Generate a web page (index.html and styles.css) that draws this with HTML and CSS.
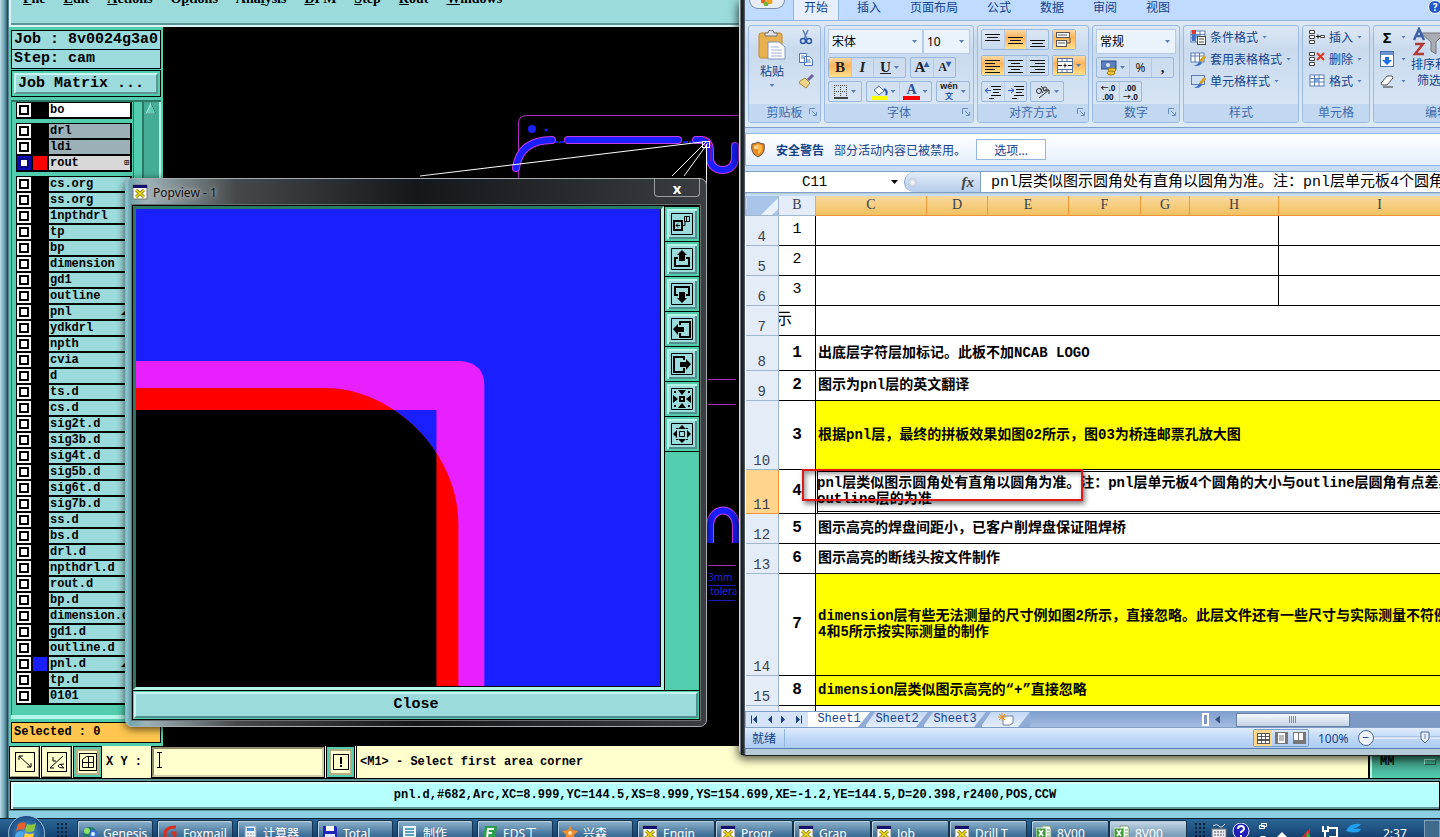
FILE: index.html
```html
<!DOCTYPE html>
<html lang="zh-CN">
<head>
    <meta charset="UTF-8">
    <meta name="viewport" content="width=device-width, initial-scale=1.0">
    <title>Genesis / Excel</title>
    <link rel="stylesheet" href="styles.css">
</head>
<body>
    <!-- 图标库 -->
    <svg class="sprite" xmlns="http://www.w3.org/2000/svg">
        <symbol id="i-x" viewBox="0 0 16 16">
            <rect x="1" y="1" width="14" height="14" fill="#fff" stroke="#777"></rect>
            <rect x="1" y="1" width="14" height="3" fill="#13136e"></rect>
            <path d="M4 6l8 7M12 6l-8 7" stroke="#8a7d10" stroke-width="3"></path>
            <path d="M4 6l8 7M12 6l-8 7" stroke="#f2e01c" stroke-width="1.5"></path>
        </symbol>
        <symbol id="i-xls" viewBox="0 0 16 16">
            <path d="M6 1h8l1 2v12H6z" fill="#f4f8f2" stroke="#7c9a78"></path>
            <path d="M11 5h3M11 8h3M11 11h3" stroke="#6fae6a"></path>
            <rect x="0" y="3" width="10" height="10" fill="#3f9a3a" stroke="#dff0dc"></rect>
            <path d="M3 5l4 6M7 5l-4 6" stroke="#fff" stroke-width="1.6"></path>
        </symbol>
        <symbol id="i-sheet" viewBox="0 0 16 16">
            <rect x="1" y="2" width="14" height="11" fill="#fff" stroke="#5a7db5"></rect>
            <path d="M1 5.500h14M1 9h14M5.500 2v11M10 2v11" stroke="#5a7db5"></path>
            <rect x="6" y="6" width="4" height="3" fill="#7fa8e0"></rect>
        </symbol>
        <symbol id="i-brush" viewBox="0 0 16 16">
            <rect x="1" y="2" width="13" height="9" fill="#fff" stroke="#5a7db5"></rect>
            <path d="M1 5h13M5 2v9M9.500 2v9" stroke="#5a7db5"></path>
            <path d="M15 5l-5 6" stroke="#d9a023" stroke-width="3"></path>
            <path d="M10 10l2 2c-2 3-5 3-8 3 3-1 4-3 6-5z" fill="#3b6fc9"></path>
        </symbol>
        <symbol id="i-left" viewBox="0 0 16 14">
            <path d="M0 1.500h15M0 4.500h10M0 7.500h15M0 10.500h10M0 13.500h15" stroke="#111"></path>
        </symbol>
        <symbol id="i-center" viewBox="0 0 16 14">
            <path d="M0 1.500h15M3 4.500h9M0 7.500h15M3 10.500h9M0 13.500h15" stroke="#111"></path>
        </symbol>
        <symbol id="i-right" viewBox="0 0 16 14">
            <path d="M0 1.500h15M5 4.500h10M0 7.500h15M5 10.500h10M0 13.500h15" stroke="#111"></path>
        </symbol>
        <symbol id="i-launch" viewBox="0 0 8 8">
            <path d="M.5 6V.5H6M3 3l4 4M7.500 4v3.500H4" stroke="#6d8fbf" fill="none"></path>
        </symbol>
    </svg>

    <!-- Genesis 主窗口 -->
    <main class="genesis">
        <div class="menubar">
            <nav class="menu">
                <a href="#"><u>F</u>ile</a>
                <a href="#"><u>E</u>dit</a>
                <a href="#"><u>A</u>ctions</a>
                <a href="#">O<u>p</u>tions</a>
                <a href="#">Ana<u>l</u>ysis</a>
                <a href="#"><u>D</u>FM</a>
                <a href="#"><u>S</u>tep</a>
                <a href="#"><u>R</u>out</a>
                <a href="#"><u>W</u>indows</a>
            </nav>
        </div>

        <div class="workspace">
            <aside class="sidebar">
                <div class="job-info">
                    <div>Job : 8v0024g3a0</div>
                    <div>Step: cam</div>
                </div>
                <div class="matrix-box">
                    <button class="matrix" type="button">Job Matrix ...</button>
                </div>
                <div class="layers">
                    <div class="layer-list">
                        <div class="layer-group">
                            <label class="layer board"><input type="checkbox"><i></i><span>bo</span></label>
                        </div>
                        <div class="layer-group">
                            <label class="layer drill"><input type="checkbox"><i></i><span>drl</span></label>
                            <label class="layer drill"><input type="checkbox"><i></i><span>ldi</span></label>
                            <label class="layer work"><input type="checkbox"><i class="red"></i><span>rout<b>⊞</b></span></label>
                        </div>
                        <div class="layer-group">
                            <label class="layer"><input type="checkbox"><i></i><span>cs.org</span></label>
                            <label class="layer"><input type="checkbox"><i></i><span>ss.org</span></label>
                            <label class="layer"><input type="checkbox"><i></i><span>1npthdrl</span></label>
                            <label class="layer"><input type="checkbox"><i></i><span>tp</span></label>
                            <label class="layer"><input type="checkbox"><i></i><span>bp</span></label>
                            <label class="layer"><input type="checkbox"><i></i><span>dimension</span></label>
                            <label class="layer"><input type="checkbox"><i></i><span>gd1</span></label>
                            <label class="layer"><input type="checkbox"><i></i><span>outline</span></label>
                            <label class="layer"><input type="checkbox"><i></i><span>pnl<b>◢</b></span></label>
                            <label class="layer"><input type="checkbox"><i></i><span>ydkdrl</span></label>
                            <label class="layer"><input type="checkbox"><i></i><span>npth</span></label>
                            <label class="layer"><input type="checkbox"><i></i><span>cvia</span></label>
                            <label class="layer"><input type="checkbox"><i></i><span>d</span></label>
                            <label class="layer"><input type="checkbox"><i></i><span>ts.d</span></label>
                            <label class="layer"><input type="checkbox"><i></i><span>cs.d</span></label>
                            <label class="layer"><input type="checkbox"><i></i><span>sig2t.d</span></label>
                            <label class="layer"><input type="checkbox"><i></i><span>sig3b.d</span></label>
                            <label class="layer"><input type="checkbox"><i></i><span>sig4t.d</span></label>
                            <label class="layer"><input type="checkbox"><i></i><span>sig5b.d</span></label>
                            <label class="layer"><input type="checkbox"><i></i><span>sig6t.d</span></label>
                            <label class="layer"><input type="checkbox"><i></i><span>sig7b.d</span></label>
                            <label class="layer"><input type="checkbox"><i></i><span>ss.d</span></label>
                            <label class="layer"><input type="checkbox"><i></i><span>bs.d</span></label>
                            <label class="layer"><input type="checkbox"><i></i><span>drl.d</span></label>
                            <label class="layer"><input type="checkbox"><i></i><span>npthdrl.d</span></label>
                            <label class="layer"><input type="checkbox"><i></i><span>rout.d</span></label>
                            <label class="layer"><input type="checkbox"><i></i><span>bp.d</span></label>
                            <label class="layer"><input type="checkbox"><i></i><span>dimension.d</span></label>
                            <label class="layer"><input type="checkbox"><i></i><span>gd1.d</span></label>
                            <label class="layer"><input type="checkbox"><i></i><span>outline.d</span></label>
                            <label class="layer"><input type="checkbox"><i class="blue"></i><span>pnl.d<b>◢</b></span></label>
                            <label class="layer"><input type="checkbox"><i></i><span>tp.d</span></label>
                            <label class="layer"><input type="checkbox"><i></i><span>0101</span></label>
                        </div>
                    </div>
                    <div class="layer-scroll">
                        <svg width="12" height="14" viewBox="0 0 12 14"><path d="M6 1L1 12h10z" fill="#5fcdb2" stroke="#b5f5e4"></path><path d="M6 1l5 11H1" fill="none" stroke="#2c7a66"></path></svg>
                    </div>
                </div>
                <div class="selected">Selected : 0</div>
            </aside>

            <svg class="board-view" xmlns="http://www.w3.org/2000/svg">
                <g transform="translate(-163 -27)" fill="none">
                    <path d="M518.500 200V123q0-7 8-7.500H745" stroke="#b32fc4"></path>
                    <path d="M516 168q4-28 36-28M568 140h110" stroke="#c73bf0" stroke-width="8" stroke-linecap="round"></path>
                    <path d="M516 168q4-28 36-28M568 140h110" stroke="#1a1fff" stroke-width="6" stroke-linecap="round"></path>
                    <path d="M696 140h6q8 1 8 12v6c0 16 25 16 25 0v-12" stroke="#c73bf0" stroke-width="8" stroke-linecap="round"></path>
                    <path d="M696 140h6q8 1 8 12v6c0 16 25 16 25 0v-12" stroke="#1a1fff" stroke-width="6" stroke-linecap="round"></path>
                    <path d="M703 137q6 1 8 8v16" stroke="#c3143a"></path>
                    <circle cx="532" cy="129" r="4" fill="#1a1fff"></circle>
                    <circle cx="546" cy="130" r="1.500" fill="#1a1fff"></circle>
                    <path d="M556 142h10M683 142h10" stroke="#1a1fff" stroke-width="2" stroke-dasharray="2 1"></path>
                    <path d="M420 176L702 142M672 176l34-34M684 176l24-33M706.500 144v40" stroke="#fff"></path>
                    <rect x="702.500" y="141.500" width="7" height="6" stroke="#fff"></rect>
                    <path d="M708 379.500h28M708 404.500h28M708 565.500h28" stroke="#b32fc4"></path>
                    <path d="M710 543v-16c0-22 26-22 26 0v16" stroke="#c73bf0" stroke-width="8"></path>
                    <path d="M710 543v-16c0-22 26-22 26 0v16" stroke="#1a1fff" stroke-width="6"></path>
                    <path d="M708 585.500h28M708 600.500h28" stroke="#1a1fc0"></path>
                    <text class="board-text" x="708" y="581">3mm</text>
                    <text class="board-text" x="710" y="595">tolera</text>
                </g>
            </svg>
        </div>

        <!-- 命令行 -->
        <div class="command">
            <button class="tool" type="button" aria-label="zoom">
                <svg width="20" height="20" viewBox="0 0 20 20" fill="none" stroke="#000"><rect x=".5" y=".5" width="19" height="19"></rect><path d="M4 4l12 11M4 8V4h4M16 11v4h-4"></path></svg>
            </button>
            <button class="tool" type="button" aria-label="angle">
                <svg width="20" height="20" viewBox="0 0 20 20" fill="none" stroke="#000"><rect x=".5" y=".5" width="19" height="19"></rect><path d="M3 16L16 4M3 16h4M6 5v4h3M13 12l4 4M17 12q-6 0-6 2t6 2"></path></svg>
            </button>
            <button class="tool green" type="button" aria-label="grid">
                <svg width="18" height="18" viewBox="0 0 18 18" fill="none" stroke="#000"><rect x=".5" y=".5" width="17" height="17"></rect><path d="M3.500 14.500v-8l4-3h7v11zM3 9.500h12M9.500 3v12"></path></svg>
            </button>
            <label class="xy" for="xy">X Y :</label>
            <div class="xy-field">
                <svg width="7" height="16" viewBox="0 0 7 16" fill="none" stroke="#000"><path d="M1 .5h5M3.500 1v14M1 15.500h5"></path></svg>
                <input id="xy" type="text">
            </div>
            <button class="tool green" type="button" aria-label="abort">
                <svg width="16" height="16" viewBox="0 0 16 16" fill="none" stroke="#000"><rect x=".5" y=".5" width="15" height="15"></rect><path d="M8 3v7M8 11v2" stroke-width="2"></path></svg>
            </button>
            <div class="hint">&lt;M1&gt; - Select first area corner</div>
            <button class="unit" type="button">MM<i></i></button>
        </div>
        <div class="status-wrap">
            <div class="status">pnl.d,#682,Arc,XC=8.999,YC=144.5,XS=8.999,YS=154.699,XE=-1.2,YE=144.5,D=20.398,r2400,POS,CCW</div>
        </div>
    </main>

    <!-- Excel 窗口 -->
    <section class="excel">
        <div class="tabs">
            <div class="orb"><svg width="20" height="12" viewBox="0 0 20 12"><rect x="1" y="-4" width="7" height="9" rx="2" fill="#e8641b"></rect><rect x="9" y="-2" width="9" height="8" rx="2" fill="#f0a21e"></rect><rect x="5" y="3" width="7" height="6" rx="2" fill="#7ab33a"></rect></svg></div>
            <a class="tab active" href="#">开始</a>
            <a class="tab" href="#">插入</a>
            <a class="tab" href="#">页面布局</a>
            <a class="tab" href="#">公式</a>
            <a class="tab" href="#">数据</a>
            <a class="tab" href="#">审阅</a>
            <a class="tab" href="#">视图</a>
            <button class="help" type="button">?</button>
        </div>

        <div class="ribbon">
            <div class="group g-clip">
                <div class="group-body split">
                    <button class="big" type="button">
                        <svg width="28" height="30" viewBox="0 0 28 30"><rect x="1" y="3" width="23" height="25" rx="2" fill="#e8b04e" stroke="#c08a2d"></rect><path d="M7 6V3h3q0-3 3-3t3 3h3v3z" fill="#dfe3ea" stroke="#777"></path><path d="M10 12h11l6 5v12H10z" fill="#fff" stroke="#7d95bd"></path><path d="M13 17h8M13 20h11M13 23h11M13 26h11" stroke="#9fb3d4"></path></svg>
                        粘贴
                        <i class="caret"></i>
                    </button>
                    <div class="stack">
                        <svg width="16" height="16" viewBox="0 0 16 16" fill="none"><path d="M5 1l4 9M10 1L6 10" stroke="#5c7fb8" stroke-width="1.500"></path><circle cx="5" cy="12" r="2.500" stroke="#2d56a5" stroke-width="1.500"></circle><circle cx="11" cy="12" r="2.500" stroke="#2d56a5" stroke-width="1.500"></circle></svg>
                        <svg width="16" height="16" viewBox="0 0 16 16" fill="#fff" stroke="#4d76b8"><path d="M1.500 2.500h7v9h-7zM6.500 5.500h5l3 3v6h-8z"></path><path d="M3 5h3M3 7h3M8 9h4M8 11h5"></path></svg>
                        <svg width="16" height="16" viewBox="0 0 16 16"><path d="M15 2l-5 5" stroke="#6a5fa8" stroke-width="3"></path><path d="M2 8l5-3 5 5-4 5-7-5z" fill="#f0d58a" stroke="#a98a3d"></path></svg>
                    </div>
                </div>
                <div class="group-label"><span>剪贴板</span><svg width="8" height="8"><use href="#i-launch"></use></svg></div>
            </div>

            <div class="group g-font">
                <div class="group-body">
                    <div class="row tight">
                        <span class="combo c-font"><select aria-label="字体"><option>宋体</option></select></span>
                        <span class="combo c-size"><select aria-label="字号"><option>10</option></select></span>
                    </div>
                    <div class="row">
                        <div class="btns"><button class="on serif" type="button"><b>B</b></button><button class="serif" type="button"><em>I</em></button><button class="serif wide" type="button"><u>U</u><i class="caret"></i></button></div>
                        <div class="btns"><button class="serif" type="button">A<sup>▴</sup></button><button class="serif small" type="button">A<sup>▾</sup></button></div>
                    </div>
                    <div class="row">
                        <div class="btns"><button class="wide" type="button"><svg width="14" height="14" viewBox="0 0 14 14" stroke="#444"><path d="M.5 0v13M6.500 0v13M12.500 0v13M0 .5h13M0 6.500h13" stroke-dasharray="1 1"></path><path d="M0 13h14" stroke-width="2"></path></svg><i class="caret"></i></button></div>
                        <div class="btns">
                            <button class="wide" type="button"><svg width="17" height="16" viewBox="0 0 17 16"><path d="M3 6l5-4 5 5-5 4z" fill="#fff" stroke="#4d6ea5"></path><path d="M13 5q4 2 2 6" stroke="#2d56a5" stroke-width="2" fill="none"></path><rect x="0" y="12" width="17" height="4" fill="#ff0"></rect></svg><i class="caret"></i></button>
                            <button class="wide" type="button"><span class="font-color">A</span><i class="caret"></i></button>
                        </div>
                        <div class="btns"><button class="wide" type="button"><span class="pinyin"><span>wén</span><span>文</span></span><i class="caret"></i></button></div>
                    </div>
                </div>
                <div class="group-label"><span>字体</span><svg width="8" height="8"><use href="#i-launch"></use></svg></div>
            </div>

            <div class="group g-align">
                <div class="group-body">
                    <div class="row">
                        <div class="btns"><button type="button"><svg width="16" height="14" viewBox="0 0 16 14" stroke="#111"><path d="M0 1.500h15M2 4.500h11M0 7.500h15"></path></svg></button><button class="on" type="button"><svg width="16" height="14" viewBox="0 0 16 14" stroke="#111"><path d="M0 4.500h15M2 7.500h11M0 10.500h15"></path></svg></button><button type="button"><svg width="16" height="14" viewBox="0 0 16 14" stroke="#111"><path d="M0 7.500h15M2 10.500h11M0 13.500h15"></path></svg></button></div>
                        <div class="btns"><button class="on" type="button"><svg width="16" height="16" viewBox="0 0 16 16" fill="#fff" stroke="#555"><rect x=".5" y=".5" width="13" height="5"></rect><rect x=".5" y="8.500" width="10" height="6"></rect><path d="M2 3h9M2 11h7M14 6v5h-3" fill="none"></path></svg></button></div>
                    </div>
                    <div class="row">
                        <div class="btns"><button class="on" type="button"><svg width="16" height="14"><use href="#i-left"></use></svg></button><button type="button"><svg width="16" height="14"><use href="#i-center"></use></svg></button><button type="button"><svg width="16" height="14"><use href="#i-right"></use></svg></button></div>
                        <div class="btns"><button class="on wide" type="button"><svg width="16" height="15" viewBox="0 0 16 15" fill="#fff" stroke="#56719c"><rect x=".5" y=".5" width="15" height="14"></rect><path d="M0 3.500h16M0 11.500h16M5 0v3M10 0v3M5 12v3M10 12v3"></path><path d="M1 7.500h4M11 7.500h4M8 5.500v4M6.500 7.500h3" stroke="#111"></path></svg><i class="caret"></i></button></div>
                    </div>
                    <div class="row">
                        <div class="btns"><button type="button"><svg width="16" height="14" viewBox="0 0 16 14" stroke="#111"><path d="M6 1.500h10M8 4.500h8M8 7.500h6M6 10.500h10M4 13.500h5"></path><path d="M0 5.500h6M3 3L0 5.500l3 2.500" stroke="#2d56c5" fill="none"></path></svg></button><button type="button"><svg width="16" height="14" viewBox="0 0 16 14" stroke="#111"><path d="M6 1.500h10M8 4.500h8M8 7.500h6M6 10.500h10M4 13.500h5"></path><path d="M0 5.500h6M3 3l3 2.500L3 8" stroke="#2d56c5" fill="none"></path></svg></button></div>
                        <div class="btns"><button class="wide" type="button"><svg width="16" height="16" viewBox="0 0 16 16" fill="none" stroke="#333"><path d="M4 14L14 6M10 6h4v4"></path><circle cx="4" cy="7" r="2.500"></circle><path d="M5 4l3 5M6 2l4 5"></path><circle cx="10" cy="5" r="2"></circle></svg><i class="caret"></i></button></div>
                    </div>
                </div>
                <div class="group-label"><span>对齐方式</span><svg width="8" height="8"><use href="#i-launch"></use></svg></div>
            </div>

            <div class="group g-num">
                <div class="group-body">
                    <div class="row tight">
                        <span class="combo c-num"><select aria-label="数字格式"><option>常规</option></select></span>
                    </div>
                    <div class="row">
                        <div class="btns"><button class="wide" type="button"><svg width="16" height="16" viewBox="0 0 16 16"><rect x="0" y="1" width="15" height="8" fill="#5b7fc0" stroke="#2f4f8c"></rect><circle cx="7" cy="5" r="2" fill="#dce6f7"></circle><ellipse cx="11" cy="10" rx="4" ry="2" fill="#f0c03a" stroke="#a87d12"></ellipse><ellipse cx="10" cy="13" rx="4" ry="2" fill="#f0c03a" stroke="#a87d12"></ellipse></svg><i class="caret"></i></button><button type="button">%</button><button class="serif" type="button">,</button></div>
                    </div>
                    <div class="row">
                        <div class="btns decimals"><button type="button"><span>←.0<br>.00</span></button><button type="button"><span>.00<br>→.0</span></button></div>
                    </div>
                </div>
                <div class="group-label"><span>数字</span><svg width="8" height="8"><use href="#i-launch"></use></svg></div>
            </div>

            <div class="group g-style">
                <div class="group-body list">
                    <button type="button"><svg width="16" height="16" viewBox="0 0 16 16"><use href="#i-sheet"></use><path d="M2 1h4v4H2z" fill="#d8392b"></path><path d="M2 6h3v6H2z" fill="#3b6fc9"></path><rect x="7.500" y="7.500" width="8" height="8" fill="#fff" stroke="#444"></rect><path d="M9 10h5M9 13h5" stroke="#444"></path></svg>条件格式<i class="caret"></i></button>
                    <button type="button"><svg width="16" height="16"><use href="#i-brush"></use></svg>套用表格格式<i class="caret"></i></button>
                    <button type="button"><svg width="16" height="16" viewBox="0 0 16 16"><rect x="1.500" y="2.500" width="13" height="9" fill="#cfe0f7" stroke="#5a7db5"></rect><path d="M15 5l-5 6" stroke="#d9a023" stroke-width="3"></path><path d="M10 10l2 2c-2 3-5 3-8 3 3-1 4-3 6-5z" fill="#3b6fc9"></path></svg>单元格样式<i class="caret"></i></button>
                </div>
                <div class="group-label"><span>样式</span></div>
            </div>

            <div class="group g-cells">
                <div class="group-body list">
                    <button type="button"><svg width="16" height="16" viewBox="0 0 16 16" fill="#fff" stroke="#444"><path d="M.5 1.500h5v3h-5zM.5 6.500h5v3h-5zM.5 11.500h5v3h-5zM11.500 6.500h4v2h-4z"></path><path d="M7 7.500h4M9 5.500v4" stroke="#111"></path></svg>插入<i class="caret"></i></button>
                    <button type="button"><svg width="16" height="16" viewBox="0 0 16 16" fill="#fff" stroke="#444"><path d="M.5 1.500h5v3h-5zM.5 6.500h5v3h-5zM.5 11.500h5v3h-5z"></path><path d="M8 2l7 7M15 2L8 9" stroke="#e0341d" stroke-width="2"></path></svg>删除<i class="caret"></i></button>
                    <button type="button"><svg width="16" height="16"><use href="#i-sheet"></use></svg>格式<i class="caret"></i></button>
                </div>
                <div class="group-label"><span>单元格</span></div>
            </div>

            <div class="group g-edit">
                <div class="group-body split">
                    <div class="list">
                        <button type="button"><b class="sigma">Σ</b><i class="caret"></i></button>
                        <button type="button"><svg width="14" height="16" viewBox="0 0 14 16"><rect x=".5" y=".5" width="13" height="15" fill="#fff" stroke="#4a6fae"></rect><rect x="1" y="1" width="12" height="3" fill="#6f94d6"></rect><path d="M5 6h4v3h3l-5 5-5-5h3z" fill="#1f6fe0"></path></svg><i class="caret"></i></button>
                        <button type="button"><svg width="14" height="14" viewBox="0 0 14 14"><path d="M1 9l6-7h5l1 2-6 7H2z" fill="#fff" stroke="#555"></path><path d="M3 13h10" stroke="#333"></path></svg><i class="caret"></i></button>
                    </div>
                    <button class="big sort" type="button">
                        <svg width="36" height="30" viewBox="0 0 36 30" fill="none"><path d="M10 6h24l-9 9v12l-5-3v-9z" fill="#a9acb3" stroke="#74777e"></path><path d="M3 13L8 2l5 11M5 9h6" stroke="#3d62a8" stroke-width="2.500"></path><path d="M4 17h8L4 27h9" stroke="#b23a35" stroke-width="2.500"></path></svg>
                        <span>排序和</span>
                        <span>筛选</span>
                    </button>
                </div>
                <div class="group-label"><span>编辑</span></div>
            </div>
        </div>

        <div class="message">
            <svg width="16" height="18" viewBox="0 0 16 18"><path d="M8 1q3 2 6 2 2 9-6 13Q0 12 2 3q3 0 6-2z" fill="#f08a1d" stroke="#555"></path><path d="M8 3q2 1 4 1.500 1 6-4 9z" fill="#ffb84a"></path><path d="M4 5q2 0 4-2v5H4z" fill="#ffd28a"></path></svg>
            <strong>安全警告</strong>
            <span>部分活动内容已被禁用。</span>
            <button type="button">选项...</button>
        </div>

        <div class="formula">
            <div class="name-box"><span>C11</span><i class="caret black"></i></div>
            <div class="fx"><span class="knob"></span><em>fx</em></div>
            <div class="formula-text">pnl层类似图示圆角处有直角以圆角为准。注：pnl层单元板4个圆角</div>
        </div>

        <div class="sheet">
            <table class="grid">
                <colgroup><col class="w-row"><col class="w-b"><col class="w-c"><col class="w-d"><col class="w-e"><col class="w-f"><col class="w-g"><col class="w-h"><col class="w-i"></colgroup>
                <thead>
                    <tr><th class="corner"></th><th class="plain">B</th><th>C</th><th>D</th><th>E</th><th>F</th><th>G</th><th>H</th><th>I</th></tr>
                </thead>
                <tbody>
                    <tr class="h30"><th>4</th><td class="no thin">1</td><td colspan="6"></td><td></td></tr>
                    <tr class="h30"><th>5</th><td class="no thin">2</td><td colspan="6"></td><td></td></tr>
                    <tr class="h30"><th>6</th><td class="no thin">3</td><td colspan="6"></td><td></td></tr>
                    <tr class="h30"><th>7</th><td class="cut"><span>示</span></td><td colspan="7"></td></tr>
                    <tr class="h35"><th>8</th><td class="no">1</td><td colspan="7">出底层字符层加标记。此板不加NCAB LOGO</td></tr>
                    <tr class="h30"><th>9</th><td class="no">2</td><td colspan="7">图示为pnl层的英文翻译</td></tr>
                    <tr class="h69"><th>10</th><td class="no">3</td><td class="hl" colspan="7">根据pnl层，最终的拼板效果如图02所示，图03为桥连邮票孔放大图</td></tr>
                    <tr class="h44"><th class="cur">11</th><td class="no">4</td><td class="active-cell" colspan="7">pnl层类似图示圆角处有直角以圆角为准。注：pnl层单元板4个圆角的大小与outline层圆角有点差异<br>outline层的为准<i class="mark"></i></td></tr>
                    <tr class="h30"><th>12</th><td class="no">5</td><td colspan="7">图示高亮的焊盘间距小，已客户削焊盘保证阻焊桥</td></tr>
                    <tr class="h30"><th>13</th><td class="no">6</td><td colspan="7">图示高亮的断线头按文件制作</td></tr>
                    <tr class="h102"><th>14</th><td class="no">7</td><td class="hl" colspan="7">dimension层有些无法测量的尺寸例如图2所示，直接忽略。此层文件还有一些尺寸与实际测量不符例如<br>4和5所示按实际测量的制作</td></tr>
                    <tr class="h30"><th>15</th><td class="no">8</td><td class="hl" colspan="7">dimension层类似图示高亮的“+”直接忽略</td></tr>
                    <tr class="h6"><th></th><td></td><td colspan="7"></td></tr>
                </tbody>
            </table>
        </div>

        <div class="sheet-tabs">
            <svg width="58" height="12" viewBox="0 0 58 12" fill="#1c3f84"><path d="M5 2h1v8H5zM11 2v8L7 6zM26 2v8l-4-4zM35 2v8l4-4zM50 2v8l4-4zM55 2h1v8h-1z"></path></svg>
            <a class="first" href="#">Sheet1</a>
            <a href="#">Sheet2</a>
            <a href="#">Sheet3</a>
            <a class="new" href="#" aria-label="插入工作表"><svg width="16" height="13" viewBox="0 0 16 13"><path d="M5 3h10v7l-3 2H5z" fill="#fff" stroke="#6f7f9c"></path><path d="M4 0v8M0 4h8M1 1l6 6M7 1L1 7" stroke="#e88e1c"></path></svg></a>
            <div class="hscroll"><span class="split-grip"></span><i class="arrow-left"></i><div class="track"><div class="thumb"></div></div></div>
        </div>

        <div class="excel-status">
            <span class="ready">就绪</span>
            <div class="views">
                <button class="on" type="button" aria-label="普通"><svg width="13" height="11" viewBox="0 0 13 11"><rect width="13" height="11" fill="#555"></rect><path d="M1 1h3v2H1zM5 1h3v2H5zM9 1h3v2H9zM1 4h3v2H1zM5 4h3v2H5zM9 4h3v2H9zM1 8h3v2H1zM5 8h3v2H5zM9 8h3v2H9z" fill="#fff"></path></svg></button>
                <button type="button" aria-label="页面布局"><svg width="13" height="12" viewBox="0 0 13 12"><rect width="13" height="12" fill="#777"></rect><rect x="3" y="1" width="7" height="10" fill="#fff"></rect><path d="M4 4h5M4 6h5M4 8h5" stroke="#777"></path></svg></button>
                <button type="button" aria-label="分页预览"><svg width="13" height="12" viewBox="0 0 13 12"><rect width="13" height="12" fill="#777"></rect><path d="M1 1h4v7H1zM6 1h4v7H6z" fill="#fff"></path></svg></button>
            </div>
            <span class="zoom">100%</span>
            <button class="minus" type="button">−</button>
            <svg class="slider" width="90" height="16" viewBox="0 0 90 16"><path d="M0 7h90" stroke="#8fa9cf"></path><path d="M0 8h90" stroke="#fff"></path><path d="M47 2h8v7l-4 4-4-4z" fill="#e8eefa" stroke="#4d6a9c"></path><path d="M51 4v5" stroke="#6f86ad"></path></svg>
        </div>
    </section>

    <!-- Popview 弹窗 -->
    <section class="popview">
        <header class="pop-title">
            <svg width="16" height="16"><use href="#i-x"></use></svg>
            <span>Popview - 1</span>
            <button type="button" aria-label="close">x</button>
        </header>
        <div class="pop-body">
            <div class="pop-main">
                <div class="pop-canvas">
                    <svg viewBox="0 0 525 477" preserveAspectRatio="none" xmlns="http://www.w3.org/2000/svg">
                        <clipPath id="inner"><path d="M0 201h301v276H0z"></path></clipPath>
                        <rect width="525" height="477" fill="#1a1fff"></rect>
                        <path d="M0 152h325q24 2 24 24v301H0z" fill="#e81fff"></path>
                        <path d="M0 201h301v276H0z" fill="#1a1fff"></path>
                        <path d="M0 179h190c68 0 133 65 133 136v162H0z" fill="#f00"></path>
                        <path d="M0 179h190c68 0 133 65 133 136v162H0z" fill="#000" clip-path="url(#inner)"></path>
                    </svg>
                </div>
                <div class="pop-tools">
                    <button type="button" aria-label="popup"><svg viewBox="0 0 22 22"><path class="f" d="M.5.5h21v21H.5z"></path><path class="l" d="M3 8h8v9H3z"></path><path class="t" d="M5 12.500h4M7 10.500l-2 2 2 2M11 12.500h3V8M13.500 3.500h5v5h-5zM15.500 4v4"></path></svg></button>
                    <button type="button" aria-label="up"><svg viewBox="0 0 22 22"><path class="f" d="M.5.5h21v21H.5z"></path><path class="l" d="M7 10H4v8h14v-8h-3"></path><path d="M11 2l5 5h-2v6H8V7H6z"></path></svg></button>
                    <button type="button" aria-label="down"><svg viewBox="0 0 22 22"><path class="f" d="M.5.5h21v21H.5z"></path><path class="l" d="M7 12H4V4h14v8h-3"></path><path d="M11 20l5-5h-2V9H8v6H6z"></path></svg></button>
                    <button type="button" aria-label="left"><svg viewBox="0 0 22 22"><path class="f" d="M.5.5h21v21H.5z"></path><path class="l" d="M9 7V4h10v15H9v-4"></path><path d="M2 11l5-5v3h6v5H7v3z"></path></svg></button>
                    <button type="button" aria-label="right"><svg viewBox="0 0 22 22"><path class="f" d="M.5.5h21v21H.5z"></path><path class="l" d="M13 7V4H3v15h10v-4"></path><path d="M20 11l-5-5v3H9v5h6v3z"></path></svg></button>
                    <button type="button" aria-label="zoom in"><svg viewBox="0 0 22 22"><path class="f" d="M.5.5h21v21H.5z"></path><path class="l" d="M9 9h4v4H9z"></path><path d="M7 2h8l-4 5zM7 20h8l-4-5zM2 7v8l5-4zM20 7v8l-5-4zM3 3h2v2H3zM17 3h2v2h-2zM3 17h2v2H3zM17 17h2v2h-2z"></path></svg></button>
                    <button type="button" aria-label="zoom out"><svg viewBox="0 0 22 22"><path class="f" d="M.5.5h21v21H.5z"></path><path class="t" d="M8.500 8.500h5v5h-5z"></path><path d="M11 2l4 4H7zM11 20l4-4H7zM2 11l4-4v8zM20 11l-4-4v8zM5 5h2v1H5zM15 5h2v1h-2zM5 16h2v1H5zM15 16h2v1h-2z"></path></svg></button>
                </div>
            </div>
            <div class="pop-close"><button type="button">Close</button></div>
        </div>
    </section>

    <!-- 任务栏 -->
    <footer class="taskbar">
        <button class="start" type="button" aria-label="开始"><svg width="24" height="22" viewBox="0 0 24 22"><path d="M3 3q4-3 8-1L9 9q-4-2-8 1z" fill="#e8612c"></path><path d="M12 3q5 2 9-1l-2 8q-5 2-9 0z" fill="#8cc63f"></path><path d="M1 12q4-3 8-1l-2 8q-4-2-8 0z" fill="#4aa7e8"></path><path d="M10 12q5 2 9 0l-2 8q-5 2-9-1z" fill="#f9cf3a"></path></svg></button>
        <span class="grip"></span>
        <div class="tasks">
            <button type="button"><svg width="16" height="16" viewBox="0 0 16 16"><circle cx="8" cy="9" r="7" fill="#1f7a6a"></circle><circle cx="5" cy="6" r="3" fill="#8fe36a"></circle><circle cx="11" cy="9" r="4" fill="#3a6fe0"></circle><circle cx="11" cy="9" r="2" fill="#d5f5ff"></circle></svg>Genesis</button>
            <button type="button"><svg width="16" height="16" viewBox="0 0 16 16" fill="none" stroke="#d8301f" stroke-width="3"><path d="M14 2Q3 2 3 9t6 5q4 0 4-6H9"></path></svg>Foxmail</button>
            <button type="button"><svg width="16" height="16" viewBox="0 0 16 16"><rect x="3" y="1" width="11" height="14" fill="#eef4fb" stroke="#7d9cc4"></rect><rect x="5" y="3" width="7" height="3" fill="#4b8fd8"></rect><path d="M5 9h7M5 12h7" stroke="#888" stroke-dasharray="2 1"></path></svg>计算器</button>
            <button type="button"><svg width="16" height="16" viewBox="0 0 16 16"><path d="M1 1h13l1 2v12H1z" fill="#2026b8"></path><rect x="4" y="1" width="8" height="5" fill="#fff"></rect><rect x="3" y="9" width="10" height="6" fill="#dfe4ff"></rect></svg>Total</button>
            <button type="button"><svg width="16" height="16" viewBox="0 0 16 16"><rect x="1" y="1" width="13" height="14" fill="#eaf6fb"></rect><path d="M3 4h9M3 7h9M3 10h9" stroke="#2d86a8" stroke-width="1.500"></path></svg>制作</button>
            <button type="button"><svg width="16" height="16" viewBox="0 0 16 16"><path d="M3 1h12l-2 14H1z" fill="#2aa04a"></path><path d="M12 4H6L5 13M5 8h5" stroke="#fff" stroke-width="2" fill="none"></path></svg>EDS工</button>
            <button type="button"><svg width="16" height="16" viewBox="0 0 16 16"><path d="M8 0l2 5 6 1-4 4 1 6-5-3-5 3 1-6-4-4 6-1z" fill="#f08a2c"></path><circle cx="8" cy="8" r="2" fill="#ffe2b0"></circle></svg>兴森</button>
        </div>
        <div class="tasks grouped">
            <button type="button"><svg width="16" height="16"><use href="#i-x"></use></svg>Engin</button>
            <button type="button"><svg width="16" height="16"><use href="#i-x"></use></svg>Progr</button>
            <button type="button"><svg width="16" height="16"><use href="#i-x"></use></svg>Grap</button>
            <button type="button"><svg width="16" height="16"><use href="#i-x"></use></svg>Job</button>
            <button type="button"><svg width="16" height="16"><use href="#i-x"></use></svg>Drill T</button>
        </div>
        <div class="tasks grouped">
            <button type="button"><svg width="16" height="16"><use href="#i-xls"></use></svg>8V00</button>
            <button class="lit" type="button"><svg width="16" height="16"><use href="#i-xls"></use></svg>8V00</button>
        </div>
        <div class="tray">
            <span class="grip"></span>
            <svg width="172" height="18" viewBox="0 0 172 18">
                <path d="M2 3q4-3 6 0t6-2" stroke="#ddd" fill="none"></path><rect x="1" y="6" width="14" height="9" fill="#e5e9ef" stroke="#777"></rect><path d="M3 9h10M3 12h10" stroke="#555" stroke-dasharray="2 1"></path>
                <circle cx="30" cy="8" r="8" fill="#1d1fb5" stroke="#dfe6ff"></circle>
                <path d="M27 6q0-3 3-3t3 3q0 1-3 3v1M30 12v2" stroke="#fff" stroke-width="2" fill="none"></path>
                <path d="M50.500.5h5v3h-5zM48.500 2.500h5v3h-5z" fill="none" stroke="#fff"></path><path d="M49 13h6l-3 3z" fill="#fff"></path>
                <path d="M66 14l5-5 5 5z" fill="#fff"></path>
                <path d="M88 17L99 5v12z" fill="#e0222a"></path><path d="M96 8l5 9h-6z" fill="#2fb53a"></path>
                <path d="M112 3v5h5V3M114 8v7M117 5h9v9h-8" stroke="#fff" stroke-width="2" fill="none"></path>
                <path d="M135 8q4-9 15-7-2 3-8 5 6-1 8 0-2 6-15 2z" fill="#1fa0f0"></path>
            </svg>
            <span class="clock">2:37</span>
            <button class="peek" type="button" aria-label="显示桌面"></button>
        </div>
    </footer>
</body>
</html>
```

FILE: styles.css
```css
:root {
    --teal: #52ceae;
    --panel: #9cdbdb;
    --bevel-light: #b5f5e8;
    --bevel-dark: #4f8f8c;
    --cream: #ffffce;
    --cad-blue: #1a1fff;
    --ui-blue: #15428b;
    --ribbon-line: #9dbbe0;
    --mono: "Liberation Mono", "Noto Sans CJK SC", monospace;
    --ui: "Noto Sans", "Noto Sans CJK SC", sans-serif;
}

* {
    margin: 0;
    padding: 0;
    box-sizing: border-box;
}

html,
body {
    height: 100%;
}

body {
    position: relative;
    overflow: hidden;
    background: #000;
    font-family: var(--ui);
    font-size: 12px;
}

button,
input,
select {
    font: inherit;
    color: inherit;
    background: none;
    border: 0;
    border-radius: 0;
}

a {
    color: inherit;
    text-decoration: none;
}

svg {
    display: block;
    flex: none;
}

.sprite {
    position: absolute;
    width: 0;
    height: 0;
}

/* ---------- Genesis ---------- */
.genesis {
    position: absolute;
    top: 0;
    left: 0;
    right: 0;
    bottom: 19px;
    display: flex;
    flex-direction: column;
    padding: 0 0 7px 9px;
    background: linear-gradient(90deg, #b9dbe6 0, #5f98aa 5px, #1d3940 8px, #8ccfe4 9px);
    font-family: var(--mono);
    font-weight: bold;
    color: #000;
}

.menubar {
    height: 27px;
    overflow: hidden;
    background: var(--panel);
    border-left: 2px solid #d9f5f5;
    border-bottom: 2px solid #d9f5f5;
    box-shadow: inset 0 -2px 0 #5f9494;
}

.menu {
    display: flex;
    gap: 18px;
    margin-top: -11px;
    padding-left: 12px;
    font: bold 14px/20px "Liberation Serif", serif;
}

.workspace {
    flex: 1;
    display: flex;
    min-height: 0;
    background: #000;
}

.sidebar {
    width: 154px;
    display: flex;
    flex-direction: column;
    padding: 3px 2px 0;
    background: var(--teal);
    overflow: hidden;
}

.job-info {
    border: 1px solid #000;
    background: var(--panel);
    font-size: 15px;
    line-height: 18px;
    white-space: nowrap;
}

.job-info div {
    padding-left: 2px;
}

.job-info div + div {
    border-top: 1px solid #000;
}

.matrix-box {
    margin-top: 1px;
    padding: 2px;
    border: 1px solid #000;
}

.matrix {
    display: block;
    width: 100%;
    padding-left: 2px;
    border: 2px solid;
    border-color: #c8f5f2 #5f9494 #5f9494 #c8f5f2;
    background: var(--panel);
    font-size: 15px;
    line-height: 17px;
    text-align: left;
}

.layers {
    flex: 1;
    display: flex;
    min-height: 0;
    margin-top: 3px;
    border-top: 2px solid #2f7765;
    border-bottom: 4px solid var(--bevel-light);
}

.layer-list {
    width: 123px;
    padding: 0 1px 0 4px;
    border-left: 1px solid #2f7765;
    border-right: 1px solid #2f7765;
}

.layer-group {
    margin-bottom: 4px;
    padding-right: 2px;
    border-bottom: 1px solid #000;
    background: #000;
}

.layer {
    display: flex;
    align-items: center;
    gap: 2px;
    height: 16px;
    padding-left: 1px;
    font-size: 12px;
    line-height: 14px;
}

.layer input {
    appearance: none;
    width: 14px;
    height: 14px;
    background: #fff;
    border: 2px solid #fff;
    box-shadow: inset 0 0 0 2px #000;
}

.layer i {
    width: 14px;
    height: 14px;
    background: #000;
}

.layer i.red {
    background: #f00;
}

.layer i.blue {
    background: var(--cad-blue);
}

.layer span {
    flex: 1;
    display: flex;
    justify-content: space-between;
    height: 14px;
    padding: 0 1px;
    background: var(--panel);
    overflow: hidden;
    white-space: nowrap;
}

.layer b {
    font-size: 8px;
}

.layer.board span {
    background: #fff;
}

.layer.drill span {
    background: #9cb0b8;
}

.layer.work span {
    background: #d8d8d8;
}

.layer.work input {
    background: #fff;
    border-color: #0d0db5;
    box-shadow: inset 0 0 0 2px #0a0a80;
}

.layer-scroll {
    flex: 1;
    margin-left: 8px;
    padding-left: 1px;
    background: #45ad94;
    border-left: 2px solid #2f7765;
    border-right: 2px solid var(--bevel-light);
}

.selected {
    margin: 3px 0;
    padding-left: 2px;
    border: 1px solid #000;
    background: #ffc74f;
    font-size: 12px;
    line-height: 19px;
}

.board-view {
    flex: 1;
    height: 100%;
}

.board-text {
    fill: #2428e0;
    font: 10px "Noto Sans", sans-serif;
}

.command {
    display: flex;
    height: 33px;
    background: var(--cream);
    border-bottom: 1px solid #000;
    font-size: 12px;
}

.tool {
    display: flex;
    align-items: center;
    justify-content: center;
    width: 31px;
    margin-right: 1px;
    border: 2px solid;
    border-color: #f5f5d8 #a0a080 #a0a080 #f5f5d8;
    outline: 1px solid #000;
    outline-offset: -1px;
}

.tool.green {
    width: 29px;
    border: 3px solid var(--teal);
    box-shadow: inset 0 0 0 2px #b5ad84;
}

.xy {
    width: 47px;
    padding-left: 3px;
    line-height: 32px;
    white-space: nowrap;
}

.xy-field {
    display: flex;
    align-items: flex-start;
    width: 172px;
    margin: 1px 2px;
    padding: 3px 2px;
    border: 2px solid;
    border-color: #8f8a6b #ceceaa #ceceaa #8f8a6b;
    outline: 1px solid #000;
}

.xy-field input {
    flex: 1;
    min-width: 0;
}

.hint {
    flex: 1;
    padding-left: 3px;
    border-left: 1px solid #000;
    line-height: 32px;
}

.unit {
    display: flex;
    align-items: center;
    justify-content: space-between;
    width: 72px;
    padding: 0 4px 0 10px;
    border-left: 2px solid #000;
    background: linear-gradient(#2b6b5a, var(--teal));
    box-shadow: inset 5px 0 0 -3px var(--bevel-light);
}

.unit i {
    width: 12px;
    height: 6px;
    border: 1px solid;
    border-color: #9fe6d2 #22584a #22584a #9fe6d2;
}

.status-wrap {
    padding: 2px 0 1px 1px;
    background: #5f9494;
}

.status {
    border: 1px solid #000;
    box-shadow: inset 2px 2px 0 #d9ffff, inset 0 -2px 0 #5f9494;
    background: #b5ffff;
    font-size: 12px;
    line-height: 27px;
    text-align: center;
}

/* ---------- Excel ---------- */
.excel {
    position: absolute;
    top: 0;
    left: 739px;
    right: -40px;
    overflow: hidden;
    padding: 0 0 6px 6px;
    border-bottom: 1px solid #222;
    border-bottom-left-radius: 6px;
    background: linear-gradient(90deg, #cfd6da 0, #cfd6da 1px, #15191d 2px, #2a3138 5px, #b5ccd6 7px);
    box-shadow: -1px 3px 10px rgba(0, 0, 0, 0.7);
    color: var(--ui-blue);
}

.tabs {
    display: flex;
    gap: 7px;
    height: 20px;
    padding-left: 4px;
    background: #bfdbff;
}

.orb {
    display: flex;
    justify-content: center;
    width: 36px;
    height: 9px;
    margin-right: 1px;
    border: 1px solid #7d8fae;
    border-top: 0;
    border-radius: 0 0 18px 18px;
    background: #e9edf4;
}

.orb svg {
    height: 8px;
}

.tab {
    padding: 0 11px;
    line-height: 16px;
}

.tab.active {
    border: 1px solid #93b5e1;
    border-width: 0 1px;
    background: #e6effb;
    padding: 0 10px;
}

.help {
    width: 14px;
    height: 14px;
    margin-left: 240px;
    border: 1px solid #fff;
    border-radius: 50%;
    background: #2458c9;
    color: #fff;
    font-size: 10px;
    line-height: 12px;
    font-weight: bold;
}

.ribbon {
    display: flex;
    gap: 3px;
    padding: 4px 3px;
    background: linear-gradient(#dfe9f5, #c7d9ee 20%, #dcebf7);
    border-top: 1px solid #93b5e1;
    border-bottom: 1px solid #7f9fc9;
}

.group {
    flex: none;
    display: flex;
    flex-direction: column;
    height: 98px;
    border: 1px solid var(--ribbon-line);
    border-radius: 3px;
    background: linear-gradient(#dde8f5, #c9daee 25%, #dbe8f6);
    overflow: hidden;
}

.g-clip { width: 73px; }
.g-font { width: 150px; }
.g-align { width: 112px; }
.g-num { width: 88px; }
.g-style { width: 116px; }
.g-cells { width: 68px; }
.g-edit { width: 128px; }

.group-body {
    flex: 1;
    min-height: 0;
    padding: 3px 3px 0;
}

.group-body.split {
    display: flex;
    justify-content: space-between;
}

.g-edit .split {
    justify-content: flex-start;
}

.group-label {
    flex: none;
    display: grid;
    grid-template-columns: 14px 1fr 14px;
    justify-items: center;
    height: 18px;
    background: #c2d8f1;
    color: #3e6aaa;
    line-height: 18px;
}

.group-label span {
    grid-column: 2;
}

.group-label svg {
    margin-top: 4px;
}

.row {
    display: flex;
    gap: 4px;
    margin-bottom: 3px;
}

.row.tight {
    gap: 0;
}

.g-align .row {
    gap: 3px;
    margin-bottom: 5px;
}

.group-body .row:last-child {
    margin-bottom: 0;
}

.btns {
    display: flex;
    height: 21px;
    border: 1px solid #9ab7dc;
    border-radius: 2px;
}

.btns button {
    display: flex;
    align-items: center;
    justify-content: center;
    gap: 3px;
    width: 22px;
    color: #222;
}

.btns button + button {
    border-left: 1px solid #b5cbe6;
}

.btns button.wide {
    width: 32px;
}

.btns .on {
    background: linear-gradient(#fbd9a4, #fdb45c 40%, #ffe08a);
}

.serif {
    font-family: "Liberation Serif", serif;
    font-size: 15px;
    font-weight: bold;
}

.serif.small {
    font-size: 12px;
}

.serif sup {
    margin: -8px 0 0 -4px;
    color: #2d56a5;
    font-size: 10px;
}

.caret {
    flex: none;
    width: 5px;
    height: 3px;
    background: #5b7fb5;
    clip-path: polygon(0 0, 100% 0, 50% 100%);
}

.caret.black {
    width: 7px;
    height: 4px;
    background: #000;
}

.combo {
    display: flex;
    align-items: center;
    height: 25px;
    padding-right: 5px;
    border: 1px solid #b5cbe6;
    background: #eaf2fb;
}

.combo select {
    appearance: none;
    flex: 1;
    padding-left: 3px;
    color: #000;
    font-size: 12px;
}

.combo::after {
    content: "";
    width: 5px;
    height: 3px;
    background: #5b7fb5;
    clip-path: polygon(0 0, 100% 0, 50% 100%);
}

.c-font { width: 95px; }
.c-size { width: 47px; }
.c-num { width: 80px; }

.font-color {
    border-bottom: 4px solid #f00;
    color: #2d4f9e;
    font: bold 14px/13px "Liberation Serif", serif;
    padding: 0 3px;
}

.pinyin {
    display: flex;
    flex-direction: column;
    align-items: center;
    font: bold 9px/9px "Liberation Sans", "Noto Sans CJK SC", sans-serif;
}

.pinyin span + span {
    color: #2d56a5;
    font-size: 8px;
    line-height: 11px;
}

.decimals span {
    font-size: 8px;
    line-height: 9px;
    font-weight: bold;
}

.big {
    display: flex;
    flex-direction: column;
    align-items: center;
    gap: 4px;
    width: 40px;
    padding-top: 1px;
    line-height: 16px;
}

.big.sort {
    gap: 0;
    width: 46px;
    color: var(--ui-blue);
    white-space: nowrap;
}

.stack {
    display: flex;
    flex-direction: column;
    gap: 6px;
    padding-right: 3px;
}

.list button {
    display: flex;
    align-items: center;
    gap: 4px;
    height: 22px;
    padding-left: 3px;
    white-space: nowrap;
}

.g-edit .list button {
    gap: 7px;
}

.group-body.list,
.g-edit .split {
    padding-top: 0;
}

.sigma {
    width: 14px;
    color: #000;
    font-size: 14px;
}

.message {
    display: flex;
    align-items: center;
    gap: 10px;
    margin-top: 5px;
    padding: 0 4px;
    height: 33px;
    border: 1px solid #93b5e1;
    background: linear-gradient(#fff, #e4effc);
    box-shadow: 0 -5px 0 #c7dcf6, 0 5px 0 #c7dcf6;
}

.message button {
    width: 70px;
    height: 21px;
    border: 1px solid #93b5e1;
    background: #fff;
}

.formula {
    display: flex;
    height: 22px;
    margin-top: 5px;
    border: 1px solid #7f9fc9;
    border-width: 1px 0;
    background: #fff;
    color: #000;
    font-family: var(--mono);
}

.name-box {
    display: flex;
    align-items: center;
    width: 159px;
    padding: 0 6px 0 57px;
    justify-content: space-between;
    font-size: 14px;
}

.fx {
    display: flex;
    align-items: center;
    justify-content: space-between;
    width: 77px;
    padding: 0 6px 0 3px;
    border: 1px solid #7f9fc9;
    border-width: 0 1px;
    border-radius: 10px 0 0 10px;
    background: linear-gradient(#e4ecf8, #b5cdec);
    font: bold 15px "Liberation Serif", serif;
    color: #444;
}

.knob {
    width: 9px;
    height: 9px;
    border-radius: 50%;
    background: radial-gradient(#fff, #9fb2cc);
}

.formula-text {
    padding-left: 10px;
    font-size: 15px;
    line-height: 21px;
    white-space: nowrap;
    overflow: hidden;
}

.sheet {
    height: 517px;
    margin-top: 1px;
    background: #fff;
    border-top: 2px solid #c7dcf6;
    overflow: hidden;
}

.grid {
    table-layout: fixed;
    width: 735px;
    border-collapse: collapse;
    color: #000;
    font: bold 14px/16px var(--mono);
}

.w-row { width: 33px; }
.w-b { width: 37px; }
.w-c { width: 111px; }
.w-d { width: 61px; }
.w-e { width: 81px; }
.w-f { width: 72px; }
.w-g { width: 49px; }
.w-h { width: 89px; }
.w-i { width: 202px; }

.grid th {
    font-weight: normal;
    font-size: 14px;
    color: #39424f;
}

.grid thead th {
    height: 19px;
    border: 1px solid #f29536;
    border-top: 0;
    background: linear-gradient(#f9d99f, #f1c15f);
    font-family: "Liberation Serif", serif;
    line-height: 18px;
}

.grid thead .plain {
    border-color: #9eb6ce;
    background: #e4ecf7;
}

.grid thead .corner {
    border-color: #9eb6ce;
    background: linear-gradient(135deg, #a9c4e9 65%, #e9f1fb 65%, #e9f1fb 88%, #a9c4e9 88%);
}

.grid tbody th {
    border: 1px solid #9eb6ce;
    border-left: 0;
    background: #e4ecf7;
    vertical-align: bottom;
    line-height: 15px;
}

.grid tbody .cur {
    background: #ffd58d;
    border-color: #f29536;
}

.grid td {
    padding: 0 0 0 2px;
    border: 1px solid #000;
    border-left-width: 0;
    vertical-align: middle;
    white-space: nowrap;
    overflow: hidden;
}

.grid .no {
    padding: 0;
    text-align: center;
    font-size: 16px;
}

.grid .thin {
    font-weight: normal;
    font-size: 15px;
}

.grid .cut {
    padding: 0;
    font-weight: normal;
    font-size: 16px;
}

.cut span {
    margin-left: -3px;
}

.grid .hl {
    background: #ff0;
}

.grid .active-cell {
    position: relative;
    overflow: visible;
    padding-left: 1px;
    border-width: 1px;
    box-shadow: inset 1px 1px 0 #fff, inset 2px 2px 0 #000, inset 0 -1px 0 #fff, inset 0 -2px 0 #000;
}

/* 红色批注框 */
.mark {
    position: absolute;
    top: -1px;
    left: -14px;
    width: 281px;
    height: 32px;
    border: 2px solid #e01818;
    box-shadow: 2px 3px 5px rgba(0, 0, 0, 0.5), inset 2px 3px 5px rgba(0, 0, 0, 0.4);
}

.h6 { height: 6px; }
.h30 { height: 30px; }
.h35 { height: 35px; }
.h44 { height: 44px; }
.h69 { height: 69px; }
.h102 { height: 102px; }

.h6 th,
.h6 td {
    border-bottom: 0;
    line-height: 0;
}

.sheet-tabs {
    display: flex;
    height: 16px;
    padding-left: 1px;
    background: #8fabd6;
    border-top: 1px solid #7f9fc9;
    align-items: center;
    font-family: var(--mono);
    font-size: 12px;
}

.sheet-tabs > svg {
    padding-right: 4px;
    width: 62px;
    height: 15px;
    background: #d5e4f8;
}

.sheet-tabs a {
    height: 15px;
    width: 62px;
    margin-right: -4px;
    background: linear-gradient(#c3d8f5, #e4eefb);
    clip-path: polygon(9px 0, 100% 0, calc(100% - 12px) 100%, 0 100%, 0 13px);
    line-height: 15px;
    text-align: center;
}

.sheet-tabs a.first {
    background: #fff;
    clip-path: polygon(0 0, 100% 0, calc(100% - 12px) 100%, 0 100%);
}

.sheet-tabs a.new {
    width: 48px;
    padding: 1px 16px;
}

.hscroll {
    flex: 1;
    display: flex;
    align-items: center;
    height: 15px;
    padding-left: 172px;
    background: linear-gradient(#809fd0, #a3bbe0);
}

.sheet-tabs .new + .hscroll {
    margin-left: 4px;
}

.split-grip {
    width: 7px;
    height: 13px;
    margin-right: 6px;
    border: 2px solid #fff;
    background: #7d95bf;
}

.arrow-left {
    width: 5px;
    height: 8px;
    margin-right: 16px;
    background: #33507f;
    clip-path: polygon(100% 0, 100% 100%, 0 50%);
}

.track {
    flex: 1;
    background: #7c99c4;
}

.thumb {
    width: 114px;
    height: 14px;
    border: 1px solid #6680a8;
    background: repeating-linear-gradient(90deg, #7d8ba3 0 1px, transparent 1px 2px) center / 8px 7px no-repeat, linear-gradient(#f5f8fc, #c5d2e5);
}

.excel-status {
    display: flex;
    align-items: center;
    height: 22px;
    border-top: 1px solid #7f9fc9;
    border-bottom: 1px solid #567db0;
    background: linear-gradient(#e0ecfb, #c0d8f7 50%, #aecbf2);
}

.ready {
    width: 40px;
    padding-left: 7px;
    border-right: 1px solid #93b5e1;
}

.views {
    display: flex;
    margin-left: 468px;
    border: 1px solid #7f9fc9;
    border-radius: 2px;
}

.views button {
    display: flex;
    align-items: center;
    justify-content: center;
    width: 18px;
    height: 16px;
}

.views .on {
    background: #ffd78a;
}

.zoom {
    margin: 0 9px;
}

.minus {
    width: 16px;
    height: 16px;
    border: 1px solid #4d6a9c;
    border-radius: 50%;
    background: #eef3fb;
    line-height: 12px;
}

/* ---------- Popview ---------- */
.popview {
    position: absolute;
    top: 178px;
    left: 125px;
    width: 582px;
    padding: 0 6px 6px;
    border: 1px solid #a5adb2;
    border-radius: 7px;
    background: linear-gradient(90deg, #8ecbd8 0, #6fa3ab 4px, #9fb3b8 20px, #46494c 110px, #15181b 50%, #2a2d31 80%, #3a3d42);
    box-shadow: 0 2px 8px rgba(0, 0, 0, 0.7);
}

.pop-title {
    display: flex;
    align-items: center;
    gap: 5px;
    height: 26px;
    color: #111;
    font-size: 12px;
}

.pop-title span {
    text-shadow: 0 0 6px #ccc, 0 0 3px #aaa;
}

.pop-title button {
    align-self: flex-start;
    width: 46px;
    height: 18px;
    margin-left: auto;
    border: 1px solid #9a9da0;
    border-top: 0;
    border-radius: 0 0 4px 4px;
    color: #fff;
    font-size: 15px;
    font-weight: bold;
    line-height: 14px;
}

.pop-body {
    border: 1px solid #000;
    outline: 1px solid #6b7073;
    background: #000;
}

.pop-main {
    display: flex;
    height: 484px;
}

.pop-canvas {
    flex: 1;
    padding: 0 1px 1px 0;
    border: 3px solid;
    border-color: #2f7765 var(--bevel-light) var(--bevel-light) #2f7765;
}

.pop-canvas svg {
    width: 100%;
    height: 100%;
}

.pop-tools {
    display: flex;
    flex-direction: column;
    gap: 1px;
    width: 34px;
    margin-left: 1px;
    padding-top: 1px;
    background: linear-gradient(#000 246px, var(--teal) 246px);
}

.pop-tools button {
    display: flex;
    align-items: center;
    justify-content: center;
    height: 34px;
    border: 2px solid var(--teal);
    background: var(--panel);
    box-shadow: inset 2px 2px 0 var(--bevel-light), inset -2px -2px 0 var(--bevel-dark);
}

.pop-tools svg {
    width: 22px;
    height: 22px;
}

.pop-tools .f,
.pop-tools .t {
    fill: none;
    stroke: #000;
}

.pop-tools .l {
    fill: none;
    stroke: #000;
    stroke-width: 2;
}

.pop-close {
    margin-top: 1px;
    padding: 1px;
    background: var(--teal);
}

.pop-close button {
    display: block;
    width: 100%;
    border: 2px solid;
    border-color: #c8f5f2 var(--bevel-dark) var(--bevel-dark) #c8f5f2;
    background: var(--panel);
    font: bold 15px/22px var(--mono);
    color: #000;
}

/* ---------- 任务栏 ---------- */
.taskbar {
    position: absolute;
    left: 0;
    right: 0;
    bottom: -18px;
    height: 37px;
    display: flex;
    gap: 4px;
    padding: 1px 0 0 8px;
    border-top: 1px solid #0d2233;
    background: linear-gradient(#2b6696, #123f6e 20px);
    color: #fff;
    font-size: 12px;
}

.start {
    display: flex;
    justify-content: center;
    width: 37px;
    height: 37px;
    margin-top: -5px;
    padding-top: 5px;
    border: 1px solid #9fc0d8;
    border-radius: 50%;
    background: radial-gradient(#4f9ad0, #1a4f86 70%, #7fa5c0);
}

.grip {
    width: 10px;
    height: 20px;
    margin: 3px 6px 0 8px;
    background: radial-gradient(circle at 1px 1px, #0a1f38 1px, transparent 1px) 0 0 / 4px 4px;
}

.tasks {
    display: flex;
    gap: 4px;
}

.tasks.grouped {
    gap: 0;
}

.tasks button {
    display: flex;
    align-items: flex-start;
    gap: 5px;
    width: 76px;
    height: 34px;
    padding: 4px 0 0 4px;
    border: 1px solid #16324d;
    border-radius: 2px;
    background: linear-gradient(#8fb3cd, #3f7098 14px);
    box-shadow: inset 1px 1px 0 #b5cfe0;
    line-height: 18px;
    white-space: nowrap;
    overflow: hidden;
}

.tasks.grouped button {
    width: 78px;
}

.tasks .lit {
    background: linear-gradient(#c5d8e6, #7c9fba 14px);
}

.tray {
    flex: 1;
    display: flex;
    padding-top: 3px;
}

.tray .grip {
    margin: 0 6px 0 4px;
}

.clock {
    margin: 2px 12px 0 0;
}

.peek {
    width: 16px;
    margin: -3px 0 0 auto;
    border: 1px solid #7fa0b8;
    background: #3f6a8c;
}
```
